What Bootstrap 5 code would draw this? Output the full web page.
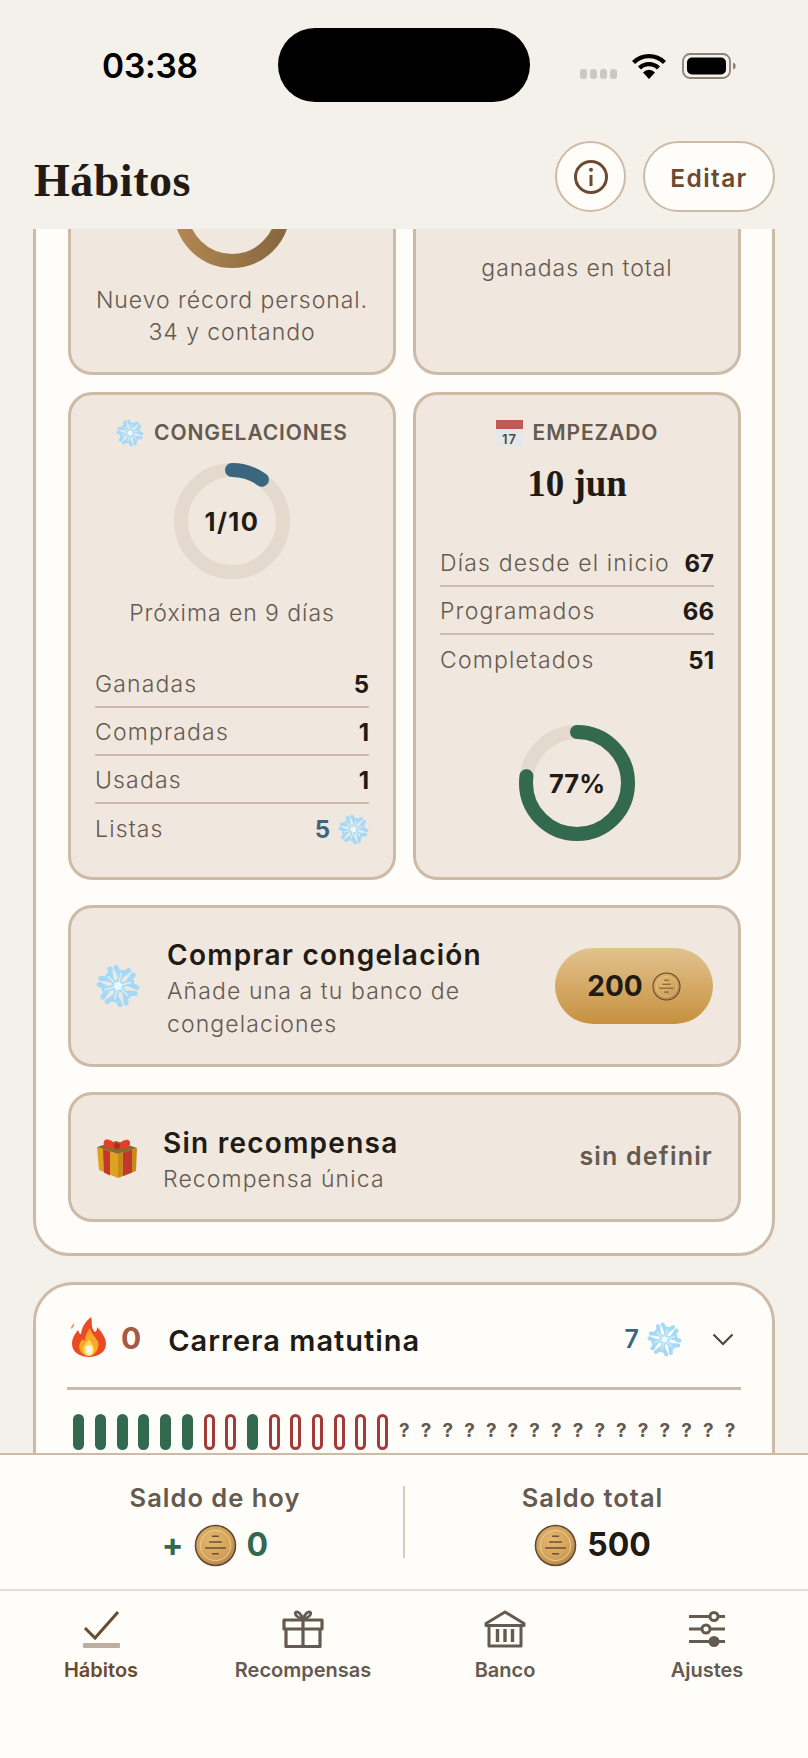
<!DOCTYPE html>
<html lang="es">
<head>
  <meta charset="UTF-8">
  <title>Hábitos</title>
  <meta name="viewport" content="width=device-width, initial-scale=1">
  <link href="https://cdn.jsdelivr.net/npm/bootstrap@5.3.0/dist/css/bootstrap.min.css" rel="stylesheet">
  <style>
    :root { --line: #cdbba8; --ink: #211a15; --muted: #645a50; --brown: #6b4a2f; --paper: #fffdf9; --sand: #f0e7de; --green: #33694f; --blue: #3b6680; }
    body { background: #f4f0ea; color: var(--ink); font-family: Inter, "Liberation Sans", sans-serif; }
    .app-shell { height: 100vh; overflow: hidden; }

    .status-bar { height: 141px; padding: 28px 71px 0 102px; flex: none; }
    .status-time { width: 176px; font: 600 33.500px/1 Inter, sans-serif; color: #000; margin-top: 22px; letter-spacing: -.2px; }
    .island { width: 252px; height: 74px; background: #000; border-radius: 37px; }
    .signal-dots { gap: 3px; margin: 41px 15px 0 50px; }
    .signal-dots i { width: 7px; height: 10px; border-radius: 3px; background: #cbc8c2; }
    .wifi-icon { margin-top: 25px; }
    .battery-icon { margin: 25px 0 0 16px; }

    .top-bar { height: 88px; padding: 0 33px 17px 34px; flex: none; position: relative; z-index: 2; background: #f4f0ea; }
    .page-title { font: 700 46px/1 "Liberation Serif", serif; margin: 17px 0 0; letter-spacing: .5px; }
    .round-btn { width: 71px; height: 71px; border: 2.5px solid var(--line); background: var(--paper); padding: 0; }
    .edit-btn { width: 132px; height: 71px; border: 2.5px solid var(--line); background: var(--paper); color: var(--brown); font-size: 24.500px; font-weight: 600; letter-spacing: 1.4px; margin-left: 17px; padding: 3px 0 0; }

    .scroll-area { flex: 1; min-height: 0; overflow: hidden; padding: 0 33px; }
    .detail-panel { margin-top: -140px; background: var(--paper); border: 3px solid var(--line); border-radius: 36px; padding: 32px 31px 31px 32px; }
    .stat-grid { display: grid; grid-template-columns: 1fr 1fr; gap: 17px; }
    .stat-box { background: var(--sand); border: 3px solid var(--line); border-radius: 24px; text-align: center; }
    .streak-box { padding: 25px 0 23px; height: 251px; }
    .earned-box { padding-top: 125px; height: 251px; }
    .freeze-box, .start-box { height: 488px; padding: 23px 24px 0; }
    .note-text { font-size: 23px; line-height: 32px; color: var(--muted); font-weight: 300; letter-spacing: .95px; }
    .box-head { height: 30px; gap: 10px; font-size: 21px; font-weight: 600; color: var(--muted); letter-spacing: .9px; }
    .ring-wrap { width: 116px; height: 116px; position: relative; margin: 0 auto; }
    .ring-wrap svg { display: block; }
    .ring-label { position: absolute; inset: 0; padding-top: 2px; display: flex; align-items: center; justify-content: center; font-size: 25.500px; font-weight: 700; }
    .date-big { font: 700 37px/44px "Liberation Serif", serif; margin-top: 14px; }
    .fact-row { height: 48px; padding-top: 3px; border-bottom: 2px solid var(--line); font-size: 23px; font-weight: 300; color: var(--muted); letter-spacing: 1.150px; }
    .fact-row:last-child { border-bottom: 0; }
    .fact-row b { font-size: 24px; font-weight: 700; color: var(--ink); letter-spacing: 0; }
    .fact-row b.blue-val { color: var(--blue); }

    .wide-box { background: var(--sand); border: 3px solid var(--line); border-radius: 24px; margin-top: 25px; padding: 0 25px; }
    .buy-box { height: 162px; }
    .reward-box { height: 130px; }
    .wide-copy { margin-top: 6px; }
    .wide-title { font-size: 28px; line-height: 36px; font-weight: 600; letter-spacing: 1.250px; }
    .wide-sub { font-size: 23px; line-height: 33px; font-weight: 300; color: var(--muted); letter-spacing: 1.100px; margin-top: 2px; }
    .price-pill { width: 158px; height: 76px; border: 0; background: linear-gradient(#e3c28e, #c6913f); font-size: 28px; font-weight: 700; color: var(--ink); gap: 9px; padding: 0; }
    .undefined-text { font-size: 25px; font-weight: 600; color: var(--muted); letter-spacing: 1.200px; }

    .habit-panel { background: var(--paper); border: 3px solid var(--line); border-radius: 40px; margin-top: 26px; padding: 32px 31px 40px; }
    .fire-icon { margin: -6px 0 0 4px; }
    .habit-name { font-size: 29px; font-weight: 600; letter-spacing: 1px; margin: 2px 0 0 27px; }
    .habit-streak { font-size: 30px; font-weight: 700; color: #a65a45; margin-left: 15px; line-height: 1; margin-top: -4px; }
    .habit-count { font-size: 25px; font-weight: 600; color: var(--blue); }
    .chevron-icon { margin: 0 7px 0 30px; }
    .habit-line { height: 3px; background: var(--line); margin: 24px 0 24px; }
    .day-strip { height: 36px; padding-left: 1px; }
    .day-slot { flex: 1 1 0; display: flex; align-items: center; justify-content: center; font-size: 19px; font-weight: 700; color: var(--muted); }
    .day-bar { width: 11px; height: 36px; border-radius: 6px; }
    .day-done { background: var(--green); }
    .day-miss { border: 3px solid #a23a38; }

    .dock { flex: none; height: 305px; background: var(--paper); border-top: 2px solid var(--line); }
    .balance-row { height: 136px; padding-top: 31px; border-bottom: 2px solid #e6dcd1; }
    .balance-col { height: 72px; text-align: center; }
    .balance-today { flex: none; width: 403px; padding-left: 27px; }
    .balance-all { flex: 1 1 0; border-left: 2px solid #d9cbbb; padding-right: 28px; }
    .balance-label { font-size: 25.500px; line-height: 24px; font-weight: 600; color: var(--muted); letter-spacing: 1px; }
    .balance-value { font-size: 32px; font-weight: 700; line-height: 44px; gap: 10px; margin-top: 13px; }
    .tab-bar { padding-top: 19px; }
    .tab-item { flex: 1 1 0; color: var(--muted); font-size: 20px; font-weight: 600; text-align: center; }
    .tab-item svg { display: block; margin: 0 auto 7px; }
    .tab-item.active-tab { color: var(--brown); }
  </style>
</head>
<body>

<!-- shared drawings -->
<svg width="0" height="0" class="position-absolute">
  <defs>
    <radialGradient id="coinFill" cx=".42" cy=".38" r=".7">
      <stop offset="0" stop-color="#e5b96f"/><stop offset=".65" stop-color="#d2a05a"/><stop offset="1" stop-color="#ab7c42"/>
    </radialGradient>
    <linearGradient id="ringBrown" x1="0" y1="0" x2="1" y2="0">
      <stop offset="0" stop-color="#b08650"/><stop offset="1" stop-color="#87683f"/>
    </linearGradient>
    <symbol id="coin" viewBox="0 0 44 44">
      <circle cx="22" cy="22" r="20.500" fill="url(#coinFill)" stroke="#5e4a33" stroke-width="1.600"/>
      <circle cx="22" cy="22" r="15.500" fill="none" stroke="#f0d9a8" stroke-width=".8"/>
      <path d="M19 12.500h6M16 18.500h12M12 24.500h20M19 30.500h6" stroke="#6d4f2a" stroke-width="1.500" stroke-linecap="round"/>
    </symbol>
    <symbol id="flake" viewBox="0 0 40 40">
      <g transform="rotate(14 20 20)" fill="none" stroke-linecap="round" stroke-linejoin="round">
        <g stroke="#a4daf8" stroke-width="4.600">
          <g id="flakeArm"><path d="M20 20V7M14 4l6 7 6-7"/></g>
          <use href="#flakeArm" transform="rotate(60 20 20)"/>
          <use href="#flakeArm" transform="rotate(120 20 20)"/>
          <use href="#flakeArm" transform="rotate(180 20 20)"/>
          <use href="#flakeArm" transform="rotate(240 20 20)"/>
          <use href="#flakeArm" transform="rotate(300 20 20)"/>
        </g>
        <g stroke="#d3effd" stroke-width="1.500">
          <g id="flakeCore"><path d="M20 20V8"/></g>
          <use href="#flakeCore" transform="rotate(60 20 20)"/>
          <use href="#flakeCore" transform="rotate(120 20 20)"/>
          <use href="#flakeCore" transform="rotate(180 20 20)"/>
          <use href="#flakeCore" transform="rotate(240 20 20)"/>
          <use href="#flakeCore" transform="rotate(300 20 20)"/>
        </g>
      </g>
      <circle cx="20" cy="20" r="3.500" fill="#eef9ff"/>
    </symbol>
  </defs>
</svg>

<div class="app-shell d-flex flex-column">

  <div class="status-bar d-flex align-items-start">
    <div class="status-time">03:38</div>
    <div class="island"></div>
    <div class="signal-dots d-flex"><i></i><i></i><i></i><i></i></div>
    <svg class="wifi-icon" width="34" height="26" viewBox="0 0 34 26">
      <g fill="none" stroke="#000" stroke-width="4.400">
        <path d="M1.500 9.500a22 22 0 0 1 31 0"/>
        <path d="M7.500 15a13.500 13.500 0 0 1 19 0"/>
      </g>
      <path d="M11 19.500a8 8 0 0 1 12 0L17 26z" fill="#000"/>
    </svg>
    <svg class="battery-icon" width="54" height="26" viewBox="0 0 54 26">
      <rect x="1" y="1" width="47" height="24" rx="7" fill="none" stroke="#8d8378" stroke-width="1.800"/>
      <rect x="5" y="4.500" width="39" height="17" rx="5" fill="#000"/>
      <path d="M51 9.500l2.500 1.500v4l-2.500 1.500z" fill="#8d8378"/>
    </svg>
  </div>

  <div class="top-bar d-flex align-items-start">
    <h1 class="page-title flex-grow-1">Hábitos</h1>
    <button class="btn round-btn rounded-circle d-flex align-items-center justify-content-center" aria-label="Información">
      <svg width="36" height="36" viewBox="0 0 36 36">
        <circle cx="18" cy="18" r="15.500" fill="none" stroke="#6b4a2f" stroke-width="3"/>
        <circle cx="18" cy="10.800" r="2" fill="#6b4a2f"/>
        <path d="M18 16v11" stroke="#6b4a2f" stroke-width="3"/>
      </svg>
    </button>
    <button class="btn edit-btn rounded-pill">Editar</button>
  </div>

  <div class="scroll-area">
    <div class="detail-panel">
      <div class="stat-grid">
        <div class="stat-box streak-box">
          <div class="ring-wrap mb-3">
            <svg width="116" height="116" viewBox="0 0 116 116"><circle cx="58" cy="58" r="51" fill="none" stroke="url(#ringBrown)" stroke-width="14"/></svg>
          </div>
          <div class="note-text">Nuevo récord personal.<br>34 y contando</div>
        </div>
        <div class="stat-box earned-box"><div class="note-text">ganadas en total</div></div>
      </div>

      <div class="stat-grid" style="margin-top:17px">
        <div class="stat-box freeze-box">
          <div class="box-head d-flex align-items-center justify-content-center">
            <svg width="28" height="28"><use href="#flake"/></svg><span>CONGELACIONES</span>
          </div>
          <div class="ring-wrap" style="margin-top:15px">
            <svg width="116" height="116" viewBox="0 0 116 116">
              <circle cx="58" cy="58" r="51" fill="none" stroke="#e3d9cc" stroke-width="14"/>
              <circle cx="58" cy="58" r="51" fill="none" stroke="#3b6680" stroke-width="14" stroke-linecap="round" stroke-dasharray="32 320.400" transform="rotate(-90 58 58)"/>
            </svg>
            <div class="ring-label" style="letter-spacing:1.500px">1/10</div>
          </div>
          <div class="note-text" style="margin-top:18px">Próxima en 9 días</div>
          <div style="margin-top:31px">
            <div class="fact-row d-flex align-items-center justify-content-between"><span>Ganadas</span><b>5</b></div>
            <div class="fact-row d-flex align-items-center justify-content-between"><span>Compradas</span><b>1</b></div>
            <div class="fact-row d-flex align-items-center justify-content-between"><span>Usadas</span><b>1</b></div>
            <div class="fact-row d-flex align-items-center justify-content-between"><span>Listas</span><span class="d-flex align-items-center gap-2"><b class="blue-val">5</b><svg width="31" height="31"><use href="#flake"/></svg></span></div>
          </div>
        </div>

        <div class="stat-box start-box">
          <div class="box-head d-flex align-items-center justify-content-center">
            <svg width="27" height="26" viewBox="0 0 27 26">
              <rect width="27" height="26" fill="#e4e8e8"/>
              <rect width="27" height="9" fill="#bf5b52"/>
              <text x="13.500" y="23.500" text-anchor="middle" font-family="Inter, sans-serif" font-size="13" fill="#4a4a4a">17</text>
            </svg>
            <span>EMPEZADO</span>
          </div>
          <div class="date-big">10 jun</div>
          <div style="margin-top:33px">
            <div class="fact-row d-flex align-items-center justify-content-between"><span>Días desde el inicio</span><b>67</b></div>
            <div class="fact-row d-flex align-items-center justify-content-between"><span>Programados</span><b>66</b></div>
            <div class="fact-row d-flex align-items-center justify-content-between"><span>Completados</span><b>51</b></div>
          </div>
          <div class="ring-wrap" style="margin-top:42px">
            <svg width="116" height="116" viewBox="0 0 116 116">
              <circle cx="58" cy="58" r="51" fill="none" stroke="#e3d9cc" stroke-width="14"/>
              <circle cx="58" cy="58" r="51" fill="none" stroke="#33694f" stroke-width="14" stroke-linecap="round" stroke-dasharray="246.700 320.400" transform="rotate(-90 58 58)"/>
            </svg>
            <div class="ring-label">77%</div>
          </div>
        </div>
      </div>

      <div class="wide-box buy-box d-flex align-items-center">
        <svg width="44" height="44" class="flex-shrink-0"><use href="#flake"/></svg>
        <div class="wide-copy flex-grow-1" style="margin-left:27px">
          <div class="wide-title">Comprar congelación</div>
          <div class="wide-sub">Añade una a tu banco de<br>congelaciones</div>
        </div>
        <button class="btn price-pill rounded-pill d-flex align-items-center justify-content-center flex-shrink-0">200 <svg width="29" height="29"><use href="#coin"/></svg></button>
      </div>

      <div class="wide-box reward-box d-flex align-items-center">
        <svg width="42" height="42" viewBox="0 0 42 42" class="flex-shrink-0">
          <path d="M1 11l21 7v24L3 34z" fill="#e0a020"/>
          <path d="M41 12l-19 6v24l18-7z" fill="#c98a1c"/>
          <path d="M1 11L20 5l21 7-19 6z" fill="#8a6a28"/>
          <path d="M7 13l7 2.500v24l-6-3zM27 16.500l9-3v23l-9 3.500z" fill="#c2382c"/>
          <path d="M21 10C14 1 6 2 8 9c2 5 9 4 13 1zm0 0c6-8 14-8 13-2-1 6-9 5-13 2z" fill="#e23f2b"/>
          <circle cx="21" cy="10" r="3" fill="#b32a1c"/>
        </svg>
        <div class="wide-copy flex-grow-1" style="margin-left:25px">
          <div class="wide-title">Sin recompensa</div>
          <div class="wide-sub">Recompensa única</div>
        </div>
        <div class="undefined-text">sin definir</div>
      </div>
    </div>

    <div class="habit-panel">
      <div class="d-flex align-items-center">
        <svg width="35" height="40" viewBox="0 0 35 40" class="fire-icon flex-shrink-0">
          <path d="M20 0c2 6-1 10 4 15 2-1 2-3 2-5 6 6 9 12 9 17 0 8-8 13-17 13S1 35 1 27c0-6 3-10 6-14 1 2 1 4 3 4 1-7 4-12 10-17z" fill="#ea4b24"/>
          <path d="M3 6c-2 2-3 4-3 6 2-1 3-3 3-6z" fill="#f08a3c"/>
          <path d="M19 11c1 6 6 9 8 14 2 6-3 14-9 14S6 33 9 26c1-2 2-3 3-4 1 1 1 2 2 2 0-5 2-9 5-13z" fill="#fba826"/>
          <path d="M18 22c1 3 5 6 5 10 0 4-2 7-5 7s-6-3-6-7c0-4 4-6 6-10z" fill="#fdd85a"/>
          <ellipse cx="18" cy="33" rx="3.500" ry="5" fill="#fdf3dc"/>
        </svg>
        <div class="habit-streak">0</div>
        <div class="habit-name flex-grow-1">Carrera matutina</div>
        <span class="habit-count">7</span>
        <svg width="35" height="35" class="ms-2"><use href="#flake"/></svg>
        <svg class="chevron-icon" width="22" height="13" viewBox="0 0 22 13"><path d="M1.500 1.500L11 11l9.500-9.500" fill="none" stroke="#4f463d" stroke-width="2.200"/></svg>
      </div>
      <div class="habit-line"></div>
      <div class="day-strip d-flex" id="dayStrip"></div>
    </div>
  </div>

  <div class="dock">
    <div class="balance-row d-flex">
      <div class="balance-col balance-today">
        <div class="balance-label">Saldo de hoy</div>
        <div class="balance-value d-flex align-items-center justify-content-center" style="color:var(--green)">
          <span>+</span><svg width="43" height="43"><use href="#coin"/></svg><span>0</span>
        </div>
      </div>
      <div class="balance-col balance-all">
        <div class="balance-label">Saldo total</div>
        <div class="balance-value d-flex align-items-center justify-content-center">
          <svg width="43" height="43"><use href="#coin"/></svg><span>500</span>
        </div>
      </div>
    </div>
    <div class="tab-bar d-flex">
      <div class="tab-item active-tab">
        <svg width="40" height="38" viewBox="0 0 40 38">
          <path d="M4 18l10 10L37 2" fill="none" stroke="#6b4a2f" stroke-width="3"/>
          <rect x="2" y="33" width="37" height="5" rx="1" fill="#bcaea0"/>
        </svg>
        Hábitos
      </div>
      <div class="tab-item">
        <svg width="42" height="38" viewBox="0 0 42 38" fill="none" stroke="#645a50" stroke-width="3.200" stroke-linejoin="round">
          <path d="M2 10h38v9H2zM4 19v17.500h34V19M21 10v26.500"/>
          <path d="M21 9c-2-5-5-8-7-7-2 2 1 6 7 7zm0 0c2-5 5-8 7-7 2 2-1 6-7 7z" stroke-width="2.800"/>
        </svg>
        Recompensas
      </div>
      <div class="tab-item">
        <svg width="42" height="38" viewBox="0 0 42 38" fill="none" stroke="#645a50" stroke-width="3" stroke-linejoin="round">
          <path d="M2 13.500L21 2l19 11.500v2H2zM5 15.500v20.500h32V15.500"/>
          <path d="M13.500 19v13M21 19v13M28.500 19v13" stroke-width="3.400"/>
        </svg>
        Banco
      </div>
      <div class="tab-item">
        <svg width="38" height="38" viewBox="0 0 38 38" fill="#645a50" stroke="#645a50" stroke-width="3">
          <path d="M1 6.500h36M1 19h36M1 31.500h36" fill="none"/>
          <circle cx="26" cy="6.500" r="4" fill="#fffdf9"/>
          <circle cx="18" cy="19" r="4" fill="#fffdf9"/>
          <circle cx="26" cy="31.500" r="4"/>
        </svg>
        Ajustes
      </div>
    </div>
  </div>
</div>

<script>
  // 31 days: g = done, r = missed, rest not reached yet
  const days = 'ggggggrrgrrrrrr';
  const strip = document.getElementById('dayStrip');
  for (let i = 0; i < 31; i++) {
    const slot = document.createElement('div');
    slot.className = 'day-slot';
    if (days[i] === 'g') slot.innerHTML = '<div class="day-bar day-done"></div>';
    else if (days[i] === 'r') slot.innerHTML = '<div class="day-bar day-miss"></div>';
    else slot.textContent = '?';
    strip.appendChild(slot);
  }
</script>
</body>
</html>
